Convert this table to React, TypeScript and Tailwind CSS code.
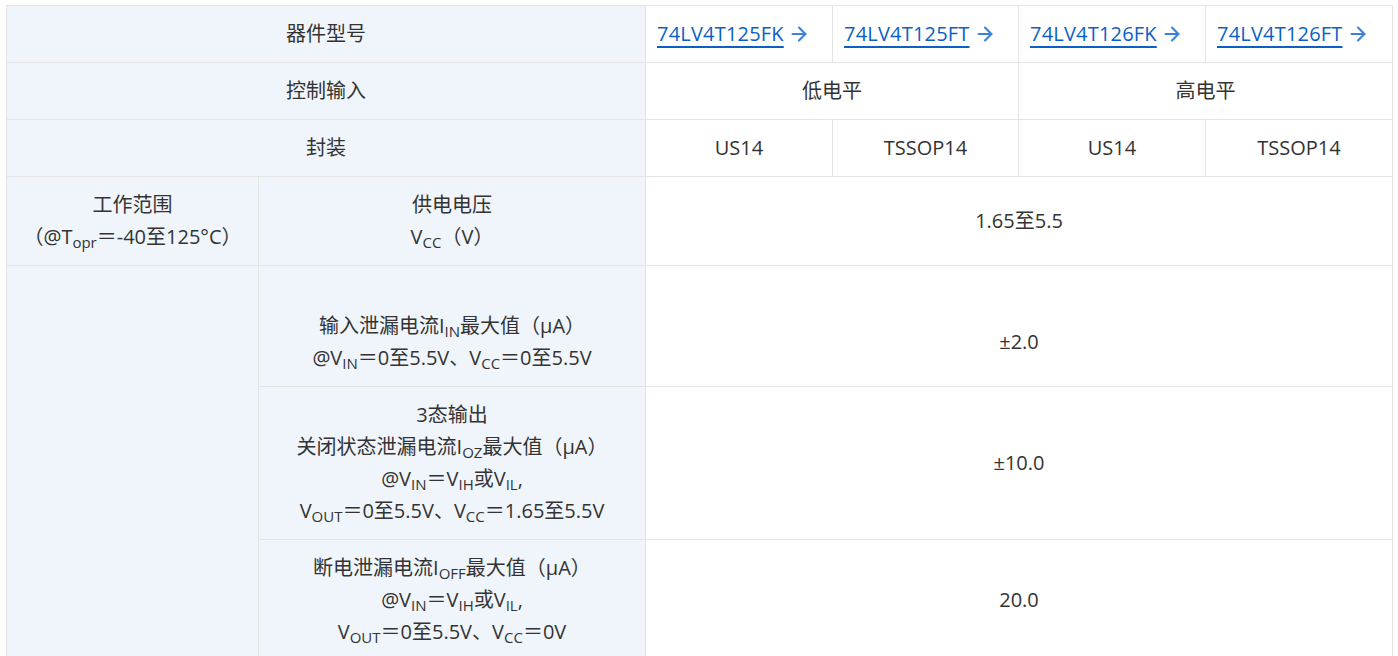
import React from "react";
import { ArrowRight } from "lucide-react";

const th = "bg-[#f0f5fc] border border-[#e4e4e4] text-center align-middle px-3 py-[12px] font-normal";
const td = "bg-white border border-[#e4e4e4] text-center align-middle px-3 py-[12px]";

function PartLink({ name }: { name: string }) {
  return (
    <td className="bg-white border border-[#e4e4e4] text-left align-middle pl-[11px] pr-1 py-[12px]">
      <span className="inline-flex items-center gap-[4px] whitespace-nowrap">
        <a className="text-[#0b5fc6] tracking-[0.2px] underline decoration-2 underline-offset-[5px] decoration-[#0b5fc6]" href="#">
          {name}
        </a>
        <ArrowRight size={22} strokeWidth={2.3} color="#3d82d9" />
      </span>
    </td>
  );
}

export default function App() {
  return (
    <div
      className="pt-[5px] pl-[6px] pr-[5px] bg-white text-[#333] text-[20px] leading-[32px]"
      style={{ fontFamily: '"Open Sans", "Noto Sans CJK SC", sans-serif' }}
    >
      <table className="border-collapse w-[1387px] table-fixed">
        <colgroup>
          <col className="w-[252px]" />
          <col className="w-[387px]" />
          <col className="w-[187px]" />
          <col className="w-[186px]" />
          <col className="w-[187px]" />
          <col className="w-[187px]" />
        </colgroup>
        <tbody>
          <tr className="h-[57px]">
            <th colSpan={2} className={th}>器件型号</th>
            <PartLink name="74LV4T125FK" />
            <PartLink name="74LV4T125FT" />
            <PartLink name="74LV4T126FK" />
            <PartLink name="74LV4T126FT" />
          </tr>
          <tr className="h-[57px]">
            <th colSpan={2} className={th}>控制输入</th>
            <td colSpan={2} className={td}>低电平</td>
            <td colSpan={2} className={td}>高电平</td>
          </tr>
          <tr className="h-[57px]">
            <th colSpan={2} className={th}>封装</th>
            <td className={td}>US14</td>
            <td className={td}>TSSOP14</td>
            <td className={td}>US14</td>
            <td className={td}>TSSOP14</td>
          </tr>
          <tr className="h-[89px]">
            <th className={th}>
              工作范围
              <br />
              （@T<sub>opr</sub>＝-40至125°C）
            </th>
            <th className={th}>
              供电电压
              <br />
              V<sub>CC</sub>（V）
            </th>
            <td colSpan={4} className={td}>1.65至5.5</td>
          </tr>
          <tr className="h-[121px]">
            <th rowSpan={3} className={th}></th>
            <th className={th}>
              <br />
              输入泄漏电流I<sub>IN</sub>最大值（μA）
              <br />
              @V<sub>IN</sub>＝0至5.5V、V<sub>CC</sub>＝0至5.5V
            </th>
            <td colSpan={4} className={td}>
              <br />
              ±2.0
            </td>
          </tr>
          <tr className="h-[153px]">
            <th className={th}>
              3态输出
              <br />
              关闭状态泄漏电流I<sub>OZ</sub>最大值（μA）
              <br />
              @V<sub>IN</sub>＝V<sub>IH</sub>或V<sub>IL</sub>,
              <br />
              V<sub>OUT</sub>＝0至5.5V、V<sub>CC</sub>＝1.65至5.5V
            </th>
            <td colSpan={4} className={td}>±10.0</td>
          </tr>
          <tr className="h-[121px]">
            <th className={th}>
              断电泄漏电流I<sub>OFF</sub>最大值（μA）
              <br />
              @V<sub>IN</sub>＝V<sub>IH</sub>或V<sub>IL</sub>,
              <br />
              V<sub>OUT</sub>＝0至5.5V、V<sub>CC</sub>＝0V
            </th>
            <td colSpan={4} className={td}>20.0</td>
          </tr>
        </tbody>
      </table>
    </div>
  );
}
